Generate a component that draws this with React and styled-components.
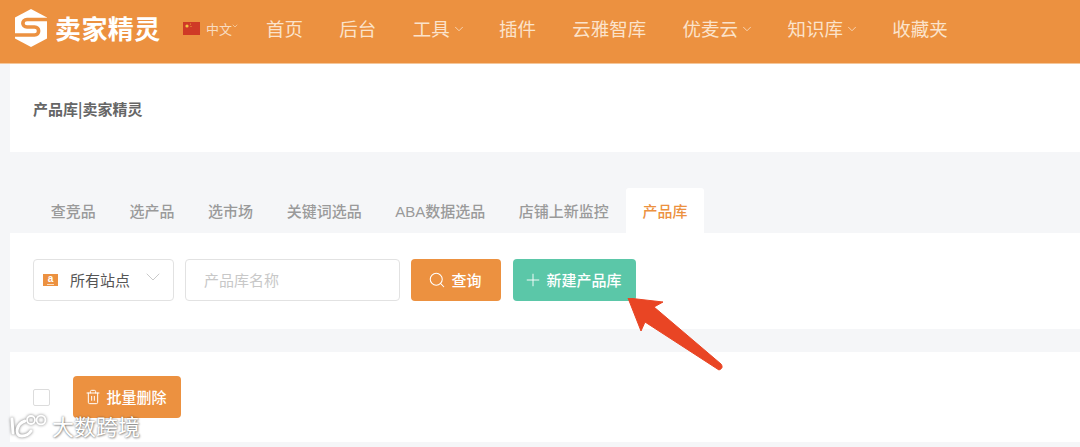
import React from "react";
import styled, { createGlobalStyle } from "styled-components";
import { Search, Plus, Trash2, ChevronDown } from "lucide-react";

const FONT = `"Noto Sans CJK SC", "Noto Sans", sans-serif`;
const ORANGE = "#ec9140";

const navItems = [
  { label: "首页" },
  { label: "后台" },
  { label: "工具", menu: true },
  { label: "插件" },
  { label: "云雅智库" },
  { label: "优麦云", menu: true },
  { label: "知识库", menu: true },
  { label: "收藏夹" },
];

const tabs = ["查竞品", "选产品", "选市场", "关键词选品", "ABA数据选品", "店铺上新监控", "产品库"];

const App = () => (
  <Page>
    <GlobalStyle />
    <Header>
      <Logo>
        <LogoMark viewBox="0 0 32 38">
          <path d="M16 0L32 8.5v21L16 38 0 29.5v-21z" fill="#fff" />
          <path
            d="M33 10.5H12C6.5 10.5 6.5 18 12 18h7.5c5.5 0 5.5 8 0 8H-1"
            fill="none"
            stroke={ORANGE}
            strokeWidth="3.6"
          />
        </LogoMark>
        <LogoText>卖家精灵</LogoText>
      </Logo>
      <Lang>
        <Flag viewBox="0 0 17 13">
          <rect width="17" height="13" fill="#cf3a26" />
          <circle cx="4" cy="4" r="1.6" fill="#f3c542" />
          <circle cx="7.4" cy="2" r=".5" fill="#f3c542" />
          <circle cx="8" cy="4.6" r=".5" fill="#f3c542" />
        </Flag>
        <LangLabel>中文</LangLabel>
        <LangChevron size={8} strokeWidth={2} />
      </Lang>
      <Nav>
        {navItems.map((item) => (
          <NavItem key={item.label}>
            {item.label}
            {item.menu && <NavChevron size={14} strokeWidth={1.5} />}
          </NavItem>
        ))}
      </Nav>
    </Header>

    <Content>
      <TitleCard>产品库|卖家精灵</TitleCard>

      <TabBar>
        {tabs.map((tab) => (
          <Tab key={tab} $active={tab === "产品库"}>
            {tab}
          </Tab>
        ))}
      </TabBar>

      <FilterCard>
        <SiteSelect>
          <AmazonIcon>a</AmazonIcon>
          <SiteLabel>所有站点</SiteLabel>
          <SelectChevron size={24} strokeWidth={0.9} />
        </SiteSelect>
        <NameInput placeholder="产品库名称" />
        <Button $color={ORANGE} $width={90}>
          <SearchIcon size={18} strokeWidth={1.4} />
          查询
        </Button>
        <Button $color="#5bc7a8" $width={123}>
          <PlusIcon size={20} strokeWidth={1.1} />
          新建产品库
        </Button>
      </FilterCard>

      <ListCard>
        <Checkbox />
        <Button $color={ORANGE} $width={108}>
          <TrashIcon size={16} strokeWidth={1.5} />
          批量删除
        </Button>
      </ListCard>
    </Content>

    <Arrow viewBox="0 0 100 80">
      <path
        d="M1 0L36 4 27 9 94 66Q97 70 92 72L18 24 14 33z"
        fill="#e94524"
        stroke="#e94524"
        strokeLinejoin="round"
      />
    </Arrow>

    <Watermark>
      <WatermarkMark viewBox="0 0 40 30">
        <g fill="none" stroke="#fff" strokeLinecap="round">
          <path d="M4 9L5 23" strokeWidth="3" />
          <path d="M17 11C8 14 6 26 14 26 18 26 21 24 23 21" strokeWidth="3" />
          <circle cx="23" cy="10" r="4" strokeWidth="1.8" />
          <circle cx="33" cy="10" r="4.4" strokeWidth="1.8" />
        </g>
      </WatermarkMark>
      大数跨境
    </Watermark>
  </Page>
);

export default App;

const GlobalStyle = createGlobalStyle`
  html, body {
    margin: 0;
    padding: 0;
    background: #f5f6f8;
    overflow: hidden;
  }
  * {
    box-sizing: border-box;
  }
`;

const Page = styled.div`
  position: relative;
  width: 1080px;
  height: 447px;
  overflow: hidden;
  background: #f5f6f8;
  font-family: ${FONT};
`;

const Header = styled.header`
  display: flex;
  align-items: center;
  height: 64px;
  padding: 0 0 7px 15px;
  background: ${ORANGE};
  border-bottom: 1px solid #f5c79a;
`;

const Logo = styled.div`
  display: flex;
  align-items: center;
  gap: 8px;
  width: 168px;
`;

const LogoMark = styled.svg`
  width: 32px;
  height: 38px;
  flex: none;
`;

const LogoText = styled.span`
  color: #fff;
  font-size: 26px;
  font-weight: 700;
  letter-spacing: 0.4px;
  line-height: 30px;
  white-space: nowrap;
`;

const Lang = styled.div`
  display: flex;
  align-items: center;
  width: 83px;
`;

const Flag = styled.svg`
  width: 17px;
  height: 13px;
  flex: none;
`;

const LangLabel = styled.span`
  margin-left: 6px;
  color: #f8dcc0;
  font-size: 13px;
`;

const LangChevron = styled(ChevronDown)`
  margin: -4px 0 0 -1px;
  color: #f8dcc0;
`;

const Nav = styled.nav`
  display: flex;
  align-items: center;
  gap: 36.3px;
`;

const NavItem = styled.span`
  display: flex;
  align-items: center;
  color: #fbe3cb;
  font-size: 18.5px;
  line-height: 26px;
  white-space: nowrap;
`;

const NavChevron = styled(ChevronDown)`
  margin: 2px -3px 0 2px;
  color: #f8dcc0;
`;

const Content = styled.main`
  padding-left: 10px;
`;

const TitleCard = styled.section`
  display: flex;
  align-items: center;
  height: 88px;
  padding-left: 23px;
  background: #fff;
  color: #666;
  font-size: 15px;
  font-weight: 700;
`;

const TabBar = styled.div`
  display: flex;
  height: 45px;
  margin-top: 36px;
  padding-left: 24px;
`;

const Tab = styled.div`
  display: flex;
  align-items: center;
  padding: 0 16.8px;
  border-radius: 3px 3px 0 0;
  background: ${(props) => (props.$active ? "#fff" : "transparent")};
  color: ${(props) => (props.$active ? ORANGE : "#9a9a9a")};
  font-family: "Liberation Sans", ${FONT};
  font-size: 15px;
  font-weight: 500;
  white-space: nowrap;
`;

const FilterCard = styled.section`
  display: flex;
  align-items: center;
  gap: 11px;
  height: 96px;
  padding: 0 0 2px 23px;
  background: #fff;
`;

const SiteSelect = styled.div`
  display: flex;
  align-items: center;
  width: 141px;
  height: 42px;
  padding: 0 8px 0 9px;
  border: 1px solid #e2e2e2;
  border-radius: 4px;
`;

const AmazonIcon = styled.span`
  position: relative;
  display: flex;
  justify-content: center;
  width: 15px;
  height: 12px;
  background: ${ORANGE};
  color: #fff;
  font-family: "Liberation Sans", sans-serif;
  font-size: 10px;
  font-weight: 700;
  line-height: 10px;

  &::after {
    content: "";
    position: absolute;
    left: 4px;
    bottom: 1px;
    width: 7px;
    height: 1px;
    background: #fbdcbd;
  }
`;

const SiteLabel = styled.span`
  flex: 1;
  margin-left: 12px;
  padding-bottom: 2px;
  color: #555;
  font-size: 15px;
`;

const SelectChevron = styled(ChevronDown)`
  margin-bottom: 6px;
  color: #c4c4c4;
`;

const NameInput = styled.input`
  width: 215px;
  height: 42px;
  padding: 0 18px 2px;
  border: 1px solid #e2e2e2;
  border-radius: 4px;
  background: #fff;
  font-family: ${FONT};
  font-size: 15px;
  outline: none;

  &::placeholder {
    color: #c8c8c8;
  }
`;

const Button = styled.button`
  display: flex;
  align-items: center;
  justify-content: center;
  gap: 7px;
  width: ${(props) => props.$width}px;
  height: 42px;
  padding: 0 0 2px;
  border: none;
  border-radius: 4px;
  background: ${(props) => props.$color};
  color: #fff;
  font-family: ${FONT};
  font-size: 15px;
  font-weight: 500;

  & + & {
    margin-left: 1px;
  }
`;

const SearchIcon = styled(Search)`
  margin: 2px -2px 0;
`;

const PlusIcon = styled(Plus)`
  margin: 2px -4px 0;
`;

const TrashIcon = styled(Trash2)`
  margin: 2px -2px 0;
`;

const ListCard = styled.section`
  display: flex;
  align-items: center;
  gap: 23px;
  height: 90px;
  margin-top: 23px;
  padding-left: 23px;
  background: #fff;
`;

const Checkbox = styled.span`
  width: 17px;
  height: 17px;
  border: 1px solid #dcdcdc;
  border-radius: 2px;
  background: #fff;
`;

const Arrow = styled.svg`
  position: absolute;
  left: 627px;
  top: 298px;
  width: 100px;
  height: 80px;
`;

const Watermark = styled.div`
  position: absolute;
  left: 8px;
  top: 410px;
  display: flex;
  align-items: center;
  gap: 4px;
  height: 30px;
  color: #fff;
  font-size: 22px;
  line-height: 30px;
  text-shadow: 0 0 2px rgba(0, 0, 0, 0.55), 1px 1px 2px rgba(0, 0, 0, 0.3);
`;

const WatermarkMark = styled.svg`
  width: 40px;
  height: 30px;
  overflow: visible;
  filter: drop-shadow(0 0 1.5px rgba(0, 0, 0, 0.55));
`;
